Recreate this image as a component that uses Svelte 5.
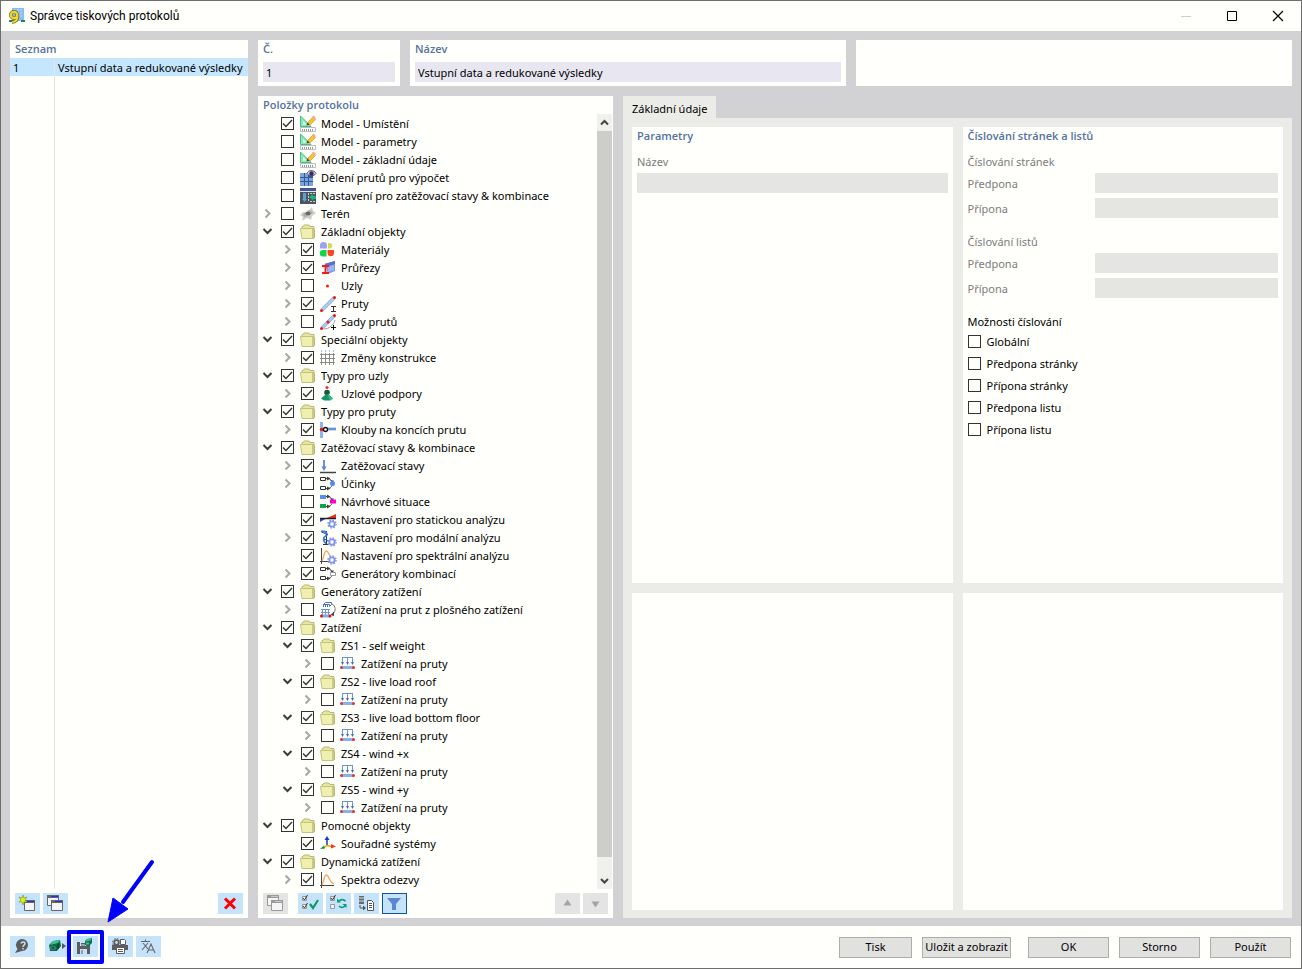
<script lang="ts">
	type Item = {
		label: string;
		icon: string;
		checked?: boolean;
		expandable?: boolean;
		open?: boolean;
		children?: Item[];
	};

	const folder = (label: string, children: Item[]): Item => ({
		label,
		icon: 'folder',
		checked: true,
		expandable: true,
		open: true,
		children
	});

	const loadCase = (label: string) =>
		folder(label, [{ label: 'Zatížení na pruty', icon: 'memberLoad', expandable: true }]);

	let items: Item[] = $state([
		{ label: 'Model - Umístění', icon: 'model', checked: true },
		{ label: 'Model - parametry', icon: 'model' },
		{ label: 'Model - základní údaje', icon: 'model' },
		{ label: 'Dělení prutů pro výpočet', icon: 'mesh' },
		{ label: 'Nastavení pro zatěžovací stavy & kombinace', icon: 'loadSettings' },
		{ label: 'Terén', icon: 'terrain', expandable: true },
		folder('Základní objekty', [
			{ label: 'Materiály', icon: 'materials', checked: true, expandable: true },
			{ label: 'Průřezy', icon: 'sections', checked: true, expandable: true },
			{ label: 'Uzly', icon: 'node', expandable: true },
			{ label: 'Pruty', icon: 'member', checked: true, expandable: true },
			{ label: 'Sady prutů', icon: 'memberSet', expandable: true }
		]),
		folder('Speciální objekty', [
			{ label: 'Změny konstrukce', icon: 'grid', checked: true, expandable: true }
		]),
		folder('Typy pro uzly', [
			{ label: 'Uzlové podpory', icon: 'support', checked: true, expandable: true }
		]),
		folder('Typy pro pruty', [
			{ label: 'Klouby na koncích prutu', icon: 'hinge', checked: true, expandable: true }
		]),
		folder('Zatěžovací stavy & kombinace', [
			{ label: 'Zatěžovací stavy', icon: 'loadCase', checked: true, expandable: true },
			{ label: 'Účinky', icon: 'actions', expandable: true },
			{ label: 'Návrhové situace', icon: 'situations' },
			{ label: 'Nastavení pro statickou analýzu', icon: 'static', checked: true },
			{ label: 'Nastavení pro modální analýzu', icon: 'modal', checked: true, expandable: true },
			{ label: 'Nastavení pro spektrální analýzu', icon: 'spectral', checked: true },
			{ label: 'Generátory kombinací', icon: 'combinations', checked: true, expandable: true }
		]),
		folder('Generátory zatížení', [
			{ label: 'Zatížení na prut z plošného zatížení', icon: 'areaLoad', expandable: true }
		]),
		folder('Zatížení', [
			loadCase('ZS1 - self weight'),
			loadCase('ZS2 - live load roof'),
			loadCase('ZS3 - live load bottom floor'),
			loadCase('ZS4 - wind +x'),
			loadCase('ZS5 - wind +y')
		]),
		folder('Pomocné objekty', [{ label: 'Souřadné systémy', icon: 'axes', checked: true }]),
		folder('Dynamická zatížení', [
			{ label: 'Spektra odezvy', icon: 'spectrum', checked: true, expandable: true }
		])
	]);

	let filterOn = $state(true);
	let name = $state('Vstupní data a redukované výsledky');

	const numberingGroups = ['Číslování stránek', 'Číslování listů'];
	const numberingOptions = [
		'Globální',
		'Předpona stránky',
		'Přípona stránky',
		'Předpona listu',
		'Přípona listu'
	];

	// null inverts the current selection
	function setAll(list: Item[], checked: boolean | null) {
		for (const item of list) {
			item.checked = checked ?? !item.checked;
			if (item.children) setAll(item.children, checked);
		}
	}
</script>

{#snippet gear()}
	<circle cx="12" cy="12" r="2.7" fill="#dfe4fd" stroke="#7f94ea" stroke-width="1.6" />
	<circle cx="12" cy="12" r="4" fill="none" stroke="#7f94ea" stroke-width="1.4" stroke-dasharray="1.6 1.54" />
	<circle cx="12" cy="12" r="1.2" fill="#fff" />
{/snippet}

{#snippet flow()}
	<path d="M6 2.5c4 0 5 1 6 3.5M6 12.5c4 0 5-1 6-3" fill="none" stroke="#3f3f3f" />
	<path d="M7 .5l3.500 2L7 4.500zM7 10.500l3.500 2L7 14.500zM10 4.500h4l-1.500 2.500z" fill="#3f3f3f" />
{/snippet}

{#snippet icon(kind: string)}
	<svg class="icon" viewBox="0 0 16 16" width="16" height="16" aria-hidden="true">
		{#if kind === 'folder'}
			<path d="M2 4V2.5h1l1-1.500h5l1 1.500h4v11" fill="#e6e6a0" stroke="#b9b972" />
			<path d="M.5 4.500h12.500v10H2z" fill="#efefb0" stroke="#c4c47c" />
			<path d="M13 4.500l1.500 1v8L13 14.500z" fill="#dcdc94" stroke="#b9b972" />
		{:else if kind === 'model'}
			<path d="M.5 0v10.500H11z" fill="#7df0b4" stroke="#4fb98a" />
			<path d="M3 5v3.500h3.500z" fill="#fffffb" />
			<path d="M7 8.500L8 6l5-5 2.500 2.500-5 5z" fill="#f9c22e" stroke="#c98d1c" stroke-width=".6" />
			<path d="M12 1l1.500-1.500L16 2l-1.500 1.500z" fill="#f0a8a0" />
			<path d="M6.500 9.500l1-3 2 2z" fill="#4a3a20" />
			<path d="M.5 11.5h15v4H.5z" fill="#fff" stroke="#bdbdbd" />
			<path d="M2.5 13v2M4.5 13v2M6.5 13v2M8.5 13v2M10.5 13v2M12.5 13v2" stroke="#999" />
		{:else if kind === 'mesh'}
			<path d="M0 3h13v13H0z" fill="#33598f" />
			<path d="M0 3h4v4H0zM5 3h3v4H5zM0 8h4v3H0zM5 8h3v3H5zM9 8h4v3H9zM0 12h4v4H0zM5 12h3v4H5zM9 12h4v4H9z" fill="#79a3e2" />
			<path d="M7 3.5c1.500-4 7-4 9 0-2 3-7 3-9 0z" fill="#ddd" stroke="#55556b" />
			<circle cx="11.500" cy="3.5" r="2.200" fill="#2d2a70" />
		{:else if kind === 'loadSettings'}
			<path d="M0 0h16v16H0z" fill="#4d545b" />
			<path d="M1 1h14v1.500H1z" fill="#3b55d8" />
			<path d="M0 3h16v1H0z" fill="#dfe6ee" />
			<path d="M3 5h3v6h1l-2.500 3L2 11h1z" fill="#5aa2d8" />
			<path d="M8.500 5v8M10 5.500h5M10 13.500h5" stroke="#c9ced2" stroke-dasharray="2 1" />
			<path d="M9 9l4-3v2h3v3h-3v1.500z" fill="#1fb573" />
		{:else if kind === 'terrain'}
			<path d="M0 9l3-3 4 0 5-5 1 4 3 2-4 3-1 4-4-2-5 3 1-4z" fill="#cdd0c6" />
			<path d="M3 8l6-4 4 2-4 4-5 1z" fill="#a9aca5" />
			<ellipse cx="8" cy="7.5" rx="2.500" ry="1.800" fill="#63666c" />
		{:else if kind === 'materials'}
			<path d="M0 6.500V4a3.500 3.500 0 0 1 7-1v3.5z" fill="#9da3ee" />
			<path d="M8 1h2.500a3 3 0 0 1 0 5.500H8z" fill="#cfe04a" />
			<path d="M6.500 8H3a3 3 0 0 0 0 6.500h3.500z" fill="#12d44a" />
			<path d="M7.500 8h6.500v3a3.200 3.200 0 0 1-6.500 0z" fill="#ff4326" />
		{:else if kind === 'sections'}
			<path d="M5 4l10-3v10l-7 3z" fill="#7d96ec" />
			<path d="M4 4l11-3v3L8 6z" fill="#5570cf" />
			<path d="M8 7l6-2v5l-6 2z" fill="#9fb2f7" />
			<path d="M2 6h7M2 13h7M5.500 6v7" stroke="#ff1717" stroke-width="1.800" />
		{:else if kind === 'node'}
			<circle cx="7.500" cy="8" r="1.500" fill="#dd2211" />
		{:else if kind === 'member' || kind === 'memberSet'}
			<path d="M2 14L14 2" stroke="#8babdc" stroke-width="3.600" />
			<path d="M2 14L14 2" stroke="#b1cdf4" stroke-width="2" />
			<circle cx="1.500" cy="14.500" r="1.500" fill="#e11" />
			<circle cx="14.500" cy="1.500" r="1.500" fill="#e11" />
			{#if kind === 'member'}
				<path d="M11 10.5h5M11 15.5h5M13.5 10.5v5" stroke="#333" />
			{:else}
				<path d="M4 15c5 0 10-4 11-9" fill="none" stroke="#999" />
				<circle cx="8" cy="8" r="1.500" fill="#e11" />
				<path d="M11 13.5h5M13.5 11v5" stroke="#111" />
			{/if}
		{:else if kind === 'grid'}
			<path d="M1.500 3v12M5.500 3v12M9.500 3v12M13.500 3v12M0 4.500h15M0 8.500h15M0 12.500h15" stroke="#8a8a8a" />
			<path d="M1.500 0v3M5.500 0v3M9.500 0v3M13.500 0v3" stroke="#9dbdf0" stroke-dasharray="2 1" />
		{:else if kind === 'support'}
			<circle cx="7" cy="1.500" r="1.500" fill="#e32" />
			<circle cx="7" cy="6.500" r="2.800" fill="#115b45" />
			<path d="M5.500 8.500h3l4.500 4-3 2H4l-3-2z" fill="#169668" />
			<path d="M7.500 8.500h1l4.500 4-3 2z" fill="#35bd86" />
		{:else if kind === 'hinge'}
			<path d="M1.500 0v16" stroke="#8fb4ea" stroke-width="3" />
			<path d="M7 7h9" stroke="#8fb4ea" stroke-width="3" />
			<path d="M2 7h14" stroke="#5673a6" />
			<circle cx="1.500" cy="7.500" r="1.700" fill="#e11" />
			<circle cx="5.500" cy="7.500" r="2" fill="#fff" stroke="#111" stroke-width="1.300" />
		{:else if kind === 'loadCase'}
			<path d="M0 14.500h16" stroke="#444" stroke-width="1.500" />
			<path d="M4 2v8" stroke="#6b95d8" stroke-width="2" />
			<path d="M1.500 8.500h5L4 13z" fill="#5d86cf" />
		{:else if kind === 'actions'}
			{@render flow()}
			<path d="M.5 1.500h5v3h-5zM.5 10.500h5v3h-5z" fill="#fff" stroke="#333" />
			<circle cx="12.500" cy="7.500" r="2.500" fill="#4b8cf5" />
		{:else if kind === 'situations'}
			{@render flow()}
			<path d="M0 1h6v4H0z" fill="#5a8ff0" />
			<path d="M0 10h6v4H0z" fill="#0ba457" />
			<path d="M10 5.500h6v4h-6z" fill="#f0c" />
		{:else if kind === 'combinations'}
			{@render flow()}
			<path d="M.5 1.500h5v3h-5zM.5 10.500h5v3h-5z" fill="#fff" stroke="#333" />
			<path d="M10.500 6.500h5v3h-5z" fill="#fff" stroke="#999" />
		{:else if kind === 'static'}
			<path d="M0 6h7l-7 4z" fill="#2f45b8" />
			<path d="M7 6l9-4v4z" fill="#f32a18" />
			<path d="M0 6.500h16" stroke="#222" stroke-width="1.500" />
			{@render gear()}
		{:else if kind === 'modal'}
			<path d="M6.500 1v13M3 14.500h6" stroke="#333" />
			<path d="M1 1.500h4c3 2 2 4 0 5s-2 5 1 7" fill="none" stroke="#3d7fd8" stroke-width="1.800" />
			<path d="M2 2l6 3M4 9l5 2" stroke="#214c9b" />
			{@render gear()}
		{:else if kind === 'spectral' || kind === 'spectrum'}
			<path d="M1.500 0v16M0 13.500h14" stroke="#444" />
			<path d="M2 13C4 9 4 3 6.500 3s2 7 7.500 9" fill="none" stroke="#f5a463" stroke-width="1.300" />
			{#if kind === 'spectral'}
				{@render gear()}
			{/if}
		{:else if kind === 'areaLoad'}
			<path d="M3.500 5V2.500l2-2h6v2l-2 2v-2h-6M5.500 3v2M7.500 3v2M3.500 2.500h5" fill="none" stroke="#4b72b8" />
			<path d="M12 2c4 2 4 7 1 10" fill="none" stroke="#777" />
			<path d="M14 9.500v4.500l-3.500-1z" fill="#444" />
			<path d="M1 7.500h9M1 10.500h9M2.500 7v6M5.500 7v6M8.500 7v6" stroke="#6f98da" />
			<path d="M1 14h9" stroke="#85a9e0" stroke-width="3" />
			<circle cx="1.500" cy="14" r="1.500" fill="#e11" />
			<circle cx="10" cy="14" r="1.500" fill="#e11" />
		{:else if kind === 'memberLoad'}
			<path d="M2 1.500h11M2.500 1v7M7.500 1v7M12.500 1v7" fill="none" stroke="#6d93cf" />
			<path d="M1 6h3l-1.500 3zM6 6h3l-1.500 3zM11 6h3l-1.500 3z" fill="#3f6db8" />
			<path d="M1 11.500h13" stroke="#8db0ea" stroke-width="3" />
			<circle cx="1.500" cy="11.500" r="1.500" fill="#e32" />
			<circle cx="13.500" cy="11.500" r="1.500" fill="#e32" />
		{:else if kind === 'axes'}
			<path d="M7 9V2" stroke="#1438c8" stroke-width="1.500" />
			<path d="M4.500 4L7 0l2.500 4z" fill="#1438c8" />
			<path d="M7 9.500l5 1" stroke="#f59b10" stroke-width="1.500" />
			<path d="M11 8l5 2.500-5 2z" fill="#f03c1c" />
			<path d="M7 9.500L3 12" stroke="#d8c400" stroke-width="1.500" />
			<path d="M4 9.500l1 3-5 .5z" fill="#0f9a4e" />
		{/if}
	</svg>
{/snippet}

{#snippet tree(list: Item[])}
	<ul>
		{#each list as item}
			<li>
				<div class="row">
					{#if item.expandable}
						<button
							class="expander"
							class:open={item.open}
							aria-label="Rozbalit {item.label}"
							aria-expanded={!!item.open}
							onclick={() => (item.open = !item.open)}
						>
							<svg viewBox="0 0 13 13" width="13" height="13">
								<path d={item.open ? 'M2.5 4l4 4 4-4' : 'M4.500 2.500l4 4-4 4'} />
							</svg>
						</button>
					{:else}
						<span class="expander"></span>
					{/if}
					<label>
						<input type="checkbox" bind:checked={item.checked} />
						{@render icon(item.icon)}
						<span>{item.label}</span>
					</label>
				</div>
				{#if item.open && item.children}
					{@render tree(item.children)}
				{/if}
			</li>
		{/each}
	</ul>
{/snippet}

{#snippet windows(title: string, frame: string)}
	<svg viewBox="0 0 19 17" width="19" height="17">
		<path d="M1.500 .5h11v10h-11z" fill="#f5f5f5" stroke={frame} />
		<path d="M1 0h12v3H1z" fill={frame} />
		<path d="M5.500 5.500h11v10h-11z" fill="#f5f5f5" stroke={frame} />
		<path d="M5 5h12v3H5z" fill={frame} />
		<path d="M5 1.500h7M9 6.500h7" stroke={title} />
	</svg>
{/snippet}

<div class="window">
	<header>
		<svg viewBox="0 0 16 16" width="16" height="16" aria-hidden="true">
			<path d="M3 0h12v13H3z" fill="#86bdf2" />
			<path d="M5 2h9M5 5h9M11 8h3" stroke="#c3e0fb" stroke-dasharray="2 1" />
			<path d="M0 12h4v2H0zM12 12h4v2h-4z" fill="#178a5c" />
			<circle cx="5" cy="7" r="3.200" fill="none" stroke="#77691c" stroke-width="3.600" />
			<path d="M8.500 7c.5 5-2 7-5.500 7" fill="none" stroke="#77691c" stroke-width="3.400" />
			<circle cx="5" cy="7" r="3.200" fill="none" stroke="#f2da2c" stroke-width="2.200" />
			<path d="M8.300 7c.5 5-2 7-5 7" fill="none" stroke="#f2da2c" stroke-width="2" />
		</svg>
		<h1>Správce tiskových protokolů</h1>
		<div class="caption">
			<button aria-label="Minimalizovat" disabled>
				<svg viewBox="0 0 12 12" width="12" height="12"><path d="M1 6.500h10" stroke="#ccccc8" /></svg>
			</button>
			<button aria-label="Maximalizovat">
				<svg viewBox="0 0 12 12" width="12" height="12">
					<path d="M1.500 1.500h9v9h-9z" fill="none" stroke="#000" />
				</svg>
			</button>
			<button aria-label="Zavřít">
				<svg viewBox="0 0 12 12" width="12" height="12">
					<path d="M1 1l10 10M11 1L1 11" stroke="#000" stroke-width="1.200" />
				</svg>
			</button>
		</div>
	</header>

	<main>
		<section class="panel list">
			<h2>Seznam</h2>
			<table>
				<tbody>
					<tr class="selected"><td>1</td><td>Vstupní data a redukované výsledky</td></tr>
					<tr class="rest"><td></td><td></td></tr>
				</tbody>
			</table>
			<div class="toolbar">
				<button class="tool" aria-label="Nový protokol">
					<svg viewBox="0 0 19 17" width="19" height="17">
						<path d="M6.500 5.500h10v10h-10z" fill="#f5f5f5" stroke="#666" />
						<path d="M6 5h11v3H6z" fill="#666" />
						<path d="M9 6.500h7" stroke="#2828f0" />
						<path d="M5 0l1 3 3-1-2 3 2 2H6l-1 3-1-3H1l2-2-2-3 3 1z" fill="#d4ef1c" stroke="#76921c" stroke-width=".6" />
					</svg>
				</button>
				<button class="tool" aria-label="Kopírovat protokol">{@render windows('#2828f0', '#666')}</button>
				<span class="spacer"></span>
				<button class="tool" aria-label="Smazat">
					<svg viewBox="0 0 19 17" width="19" height="17">
						<path d="M4 3.500l10 10M14 3.500l-10 10" stroke="#f00" stroke-width="3" />
					</svg>
				</button>
			</div>
		</section>

		<div class="content">
			<div class="top">
				<section class="panel field">
					<h2><label for="number">Č.</label></h2>
					<input id="number" type="text" value="1" readonly />
				</section>
				<section class="panel field">
					<h2><label for="name">Název</label></h2>
					<input id="name" type="text" bind:value={name} />
				</section>
				<section class="panel"></section>
			</div>

			<div class="bottom">
				<section class="panel items">
					<h2>Položky protokolu</h2>
					<div class="scroll">
						<div class="tree">{@render tree(items)}</div>
						<div class="scrollbar">
							<button aria-label="Posunout nahoru">
								<svg viewBox="0 0 13 13" width="13" height="13"><path d="M3 8.500L6.500 5l3.500 3.500" /></svg>
							</button>
							<div class="track"><div class="thumb"></div></div>
							<button aria-label="Posunout dolů">
								<svg viewBox="0 0 13 13" width="13" height="13"><path d="M3 5l3.500 3.500L10 5" /></svg>
							</button>
						</div>
					</div>
					<div class="toolbar">
						<button class="tool off" aria-label="Kopírovat" disabled>
							{@render windows('#c8c8c8', '#999')}
						</button>
						<span class="gap"></span>
						<button class="tool" aria-label="Vybrat vše" onclick={() => setAll(items, true)}>
							<svg viewBox="0 0 19 17" width="19" height="17">
								<path d="M1.500 1.500h4v4h-4zM1.500 9.500h4v4h-4z" fill="#fff" stroke="#999" />
								<path d="M2 3l1.500 2 3-5M2 11l1.500 2 3-5" fill="none" stroke="#333" />
								<path d="M9 9l3 4 5-8" fill="none" stroke="#0a9c66" stroke-width="2.200" />
							</svg>
						</button>
						<button class="tool" aria-label="Obrátit výběr" onclick={() => setAll(items, null)}>
							<svg viewBox="0 0 19 17" width="19" height="17">
								<path d="M1.500 1.500h4v4h-4zM1.500 9.500h4v4h-4z" fill="#e8f2fb" stroke="#999" />
								<path d="M2 3l1.500 2 3-5" fill="none" stroke="#333" />
								<path d="M10 6c2-2 4-2 6.500 0M16 11c-2 2-4 2-6 0" fill="none" stroke="#0a9c66" stroke-width="1.700" />
								<path d="M8 3.500v4h4zM17.500 13V9h-4z" fill="#0a9c66" />
							</svg>
						</button>
						<button class="tool" aria-label="Data do protokolu">
							<svg viewBox="0 0 19 17" width="19" height="17">
								<path d="M2 1h5v8H2z" fill="#6a6a6a" />
								<path d="M1.500 3h6M1.500 6h6" stroke="#c5e3fb" />
								<path d="M3 10v3h4" fill="none" stroke="#555" />
								<path d="M6 10.500l3 2.500-3 2.500z" fill="#555" />
								<path d="M10.500 5.500h4l2 2v8h-6z" fill="#fff" stroke="#555" />
								<path d="M12 8.500h3M12 10.500h3M12 12.500h3" stroke="#555" />
							</svg>
						</button>
						<button
							class="tool"
							class:active={filterOn}
							aria-label="Filtr"
							aria-pressed={filterOn}
							onclick={() => (filterOn = !filterOn)}
						>
							<svg viewBox="0 0 19 17" width="19" height="17">
								<path d="M2 3h14l-5 6v6H7V9z" fill="#5a86d4" />
							</svg>
						</button>
						<span class="spacer"></span>
						<button class="tool off" aria-label="Nahoru" disabled>
							<svg viewBox="0 0 19 17" width="19" height="17"><path d="M5.500 10.500l4-6 4 6z" fill="#a4a4a4" /></svg>
						</button>
						<button class="tool off" aria-label="Dolů" disabled>
							<svg viewBox="0 0 19 17" width="19" height="17"><path d="M5.500 6.500l4 6 4-6z" fill="#a4a4a4" /></svg>
						</button>
					</div>
				</section>

				<div class="details">
					<div role="tablist">
						<button class="tab" role="tab" aria-selected="true">Základní údaje</button>
					</div>
					<div class="cards" role="tabpanel">
						<section class="panel card">
							<h2>Parametry</h2>
							<label class="sub muted" for="param-name">Název</label>
							<input id="param-name" type="text" disabled />
						</section>
						<section class="panel card">
							<h2>Číslování stránek a listů</h2>
							{#each numberingGroups as group, i}
								<h3 class="sub muted">{group}</h3>
								<div class="pairs muted">
									<label for="prefix-{i}">Předpona</label>
									<input id="prefix-{i}" type="text" disabled />
									<label for="suffix-{i}">Přípona</label>
									<input id="suffix-{i}" type="text" disabled />
								</div>
							{/each}
							<h3 class="sub">Možnosti číslování</h3>
							{#each numberingOptions as option}
								<label class="option"><input type="checkbox" /><span>{option}</span></label>
							{/each}
						</section>
						<section class="panel"></section>
						<section class="panel"></section>
					</div>
				</div>
			</div>
		</div>
	</main>

	<footer>
		<button class="tool" aria-label="Nápověda">
			<svg viewBox="0 0 19 17" width="19" height="17">
				<path d="M2 15l2.500-4A6 6 0 1 1 9 13z" fill="#5c5c5c" />
				<path d="M8 5.500c.5-2 4-2 4 0 0 1.500-2 1.500-2 3.500M10 10v1.500" fill="none" stroke="#c5e3fb" stroke-width="1.500" />
			</svg>
		</button>
		<span class="gap"></span>
		<button class="tool" aria-label="Načíst šablonu">
			<svg viewBox="0 0 19 17" width="19" height="17">
				<path d="M1 7l4-4 7-1 1 6-4 5-7 0z" fill="#0d6b4c" />
				<path d="M5 3l7-1-2 3-8 2z" fill="#3fc08e" />
				<path d="M2.500 8.500h5v3h-5z" fill="#43a57e" />
				<path d="M3.500 10h3M10 5.500v5" stroke="#083f2d" stroke-width="1.500" />
				<path d="M14 5l4 3-4 3z" fill="#555" />
			</svg>
		</button>
		<div class="marked">
			<button class="tool" aria-label="Uložit jako šablonu">
				<svg viewBox="0 0 19 17" width="19" height="17">
					<path d="M1 4h11l2 2v10H1z" fill="#5c5c5c" />
					<path d="M4 4h6v4H4zM4 11h7v5H4z" fill="#c5e3fb" />
					<path d="M5 5.500h4M5 7h4M6 12v4" stroke="#5c5c5c" />
					<path d="M9 3l2-2 5-1v5l-3 3-4-1z" fill="#0d7451" />
					<path d="M10.500 1.500l5.500-1.500-1.500 2.500-5 1z" fill="#45c293" />
					<path d="M10 4.500h3v2h-3z" fill="#57b892" />
				</svg>
			</button>
			<span class="frame"></span>
			<svg class="pointer" viewBox="0 0 50 66" width="50" height="66" aria-hidden="true">
				<path d="M45 5L16 45" stroke="#00f" stroke-width="4" stroke-linecap="round" />
				<path d="M1 65L6 41l15 11z" fill="#00f" stroke="#00f" />
			</svg>
		</div>
		<span class="gap"></span>
		<button class="tool" aria-label="Nastavení tiskárny">
			<svg viewBox="0 0 19 17" width="19" height="17">
				<path d="M1 7h16v5H1z" fill="#5c5c5c" />
				<path d="M5.500 9.500h8v6h-8z" fill="#fff" stroke="#5c5c5c" />
				<path d="M7 11.500h5M7 13.500h5" stroke="#5c5c5c" />
				<path d="M9.500 1.500h4l1 1v4h-5z" fill="#fff" stroke="#5c5c5c" />
				<circle cx="5.500" cy="4.500" r="4" fill="none" stroke="#5c5c5c" stroke-dasharray="1.600 1.540" />
				<circle cx="5.500" cy="4.500" r="2.300" fill="#c5e3fb" stroke="#5c5c5c" stroke-width="1.800" />
			</svg>
		</button>
		<button class="tool" aria-label="Jazyk">
			<svg viewBox="0 0 19 17" width="19" height="17" fill="none" stroke="#666" stroke-width="1.100">
				<path d="M2 3.500h9M6.500 1.500v2M3 12l6-7M4 5l5 6" />
				<path d="M8 15l4-9 4 9M9.500 12h5" />
			</svg>
		</button>
		<span class="spacer"></span>
		<div class="actions">
			<button class="print">Tisk</button>
			<button class="save">Uložit a zobrazit</button>
			<button>OK</button>
			<button>Storno</button>
			<button>Použít</button>
		</div>
	</footer>
</div>

<style>
	:global(body) {
		margin: 0;
	}

	.window {
		min-height: 100vh;
		box-sizing: border-box;
		display: flex;
		flex-direction: column;
		border: 1px solid #6e6e6e;
		background: #fffffb;
		color: #000;
		font: 11px/18px 'Noto Sans', 'Open Sans', sans-serif;
	}

	button,
	input {
		font: inherit;
		color: inherit;
		margin: 0;
		box-sizing: border-box;
	}

	button {
		display: flex;
		align-items: center;
		justify-content: center;
		padding: 0;
		border: none;
		background: none;
	}

	header {
		display: flex;
		align-items: center;
		height: 30px;
		padding-left: 8px;
	}

	h1 {
		margin: 0 0 0 5px;
		font-family: Roboto, 'Noto Sans', sans-serif;
		font-size: 12px;
		font-weight: 400;
	}

	.caption {
		display: flex;
		margin-left: auto;
	}

	.caption button {
		width: 46px;
		height: 30px;
	}

	main {
		flex: 1;
		display: flex;
		gap: 10px;
		padding: 9px 9px 8px;
		background: #d2d2d5;
	}

	.panel {
		background: #fffffb;
	}

	h2 {
		margin: 0;
		padding: 0 5px;
		font-family: 'Open Sans', 'Noto Sans', sans-serif;
		font-size: 11px;
		line-height: 18px;
		font-weight: 600;
		color: #5672a0;
	}

	.list {
		width: 238px;
		flex-shrink: 0;
		display: flex;
		flex-direction: column;
	}

	table,
	tbody {
		flex: 1;
		display: flex;
		flex-direction: column;
	}

	tr {
		display: grid;
		grid-template-columns: 45px 1fr;
	}

	.selected {
		height: 18px;
		line-height: 20px;
		background: #c4e6fe;
	}

	.rest {
		flex: 1;
	}

	td {
		padding: 0 3px;
		white-space: nowrap;
	}

	td:first-child {
		border-right: 1px solid #e6e6e4;
	}

	.toolbar {
		display: flex;
		gap: 3px;
		padding: 4px 5px;
	}

	.tool {
		width: 25px;
		height: 21px;
		flex-shrink: 0;
		background: #c5e3fb;
	}

	.tool.off {
		background: #e4e4e4;
	}

	.tool.active {
		border: 1px solid #0a57a4;
	}

	.spacer {
		flex: 1;
	}

	.gap {
		width: 4px;
	}

	.content {
		flex: 1;
		min-width: 0;
		display: flex;
		flex-direction: column;
		gap: 10px;
	}

	.top {
		display: grid;
		grid-template-columns: 142px 1fr 1fr;
		gap: 10px;
	}

	.field {
		padding-bottom: 4px;
	}

	.field input {
		display: block;
		width: calc(100% - 10px);
		height: 20px;
		margin: 4px 5px 0;
		padding: 0 3px;
		border: none;
		background: #e8e6f1;
	}

	.bottom {
		flex: 1;
		display: flex;
		gap: 10px;
	}

	.items {
		width: 355px;
		flex-shrink: 0;
		display: flex;
		flex-direction: column;
	}

	.scroll {
		flex: 1;
		display: flex;
		padding-right: 1px;
	}

	.tree {
		flex: 1;
		padding: 1px 0 0 3px;
	}

	ul {
		margin: 0;
		padding: 0;
		list-style: none;
	}

	ul :global(ul) {
		padding-left: 20px;
	}

	.row {
		display: flex;
		align-items: center;
		height: 18px;
		white-space: nowrap;
	}

	.row label {
		display: flex;
		align-items: center;
	}

	.expander {
		width: 13px;
		height: 13px;
		margin: 0 7px 1px 0;
	}

	.expander path {
		fill: none;
		stroke: #a6a6a6;
		stroke-width: 2;
	}

	.expander.open path {
		stroke: #3c3c3c;
	}

	.icon {
		margin: 0 5px 0 6px;
		overflow: visible;
	}

	input[type='checkbox'] {
		appearance: none;
		width: 13px;
		height: 13px;
		margin-bottom: 1px;
		flex-shrink: 0;
		border: 1px solid #333;
		background: #fffffb;
	}

	input[type='checkbox']:checked {
		background-image: url("data:image/svg+xml,%3Csvg xmlns='http://www.w3.org/2000/svg' viewBox='0 0 11 11'%3E%3Cpath d='M1 5.5l3 3 6-6.5' fill='none' stroke='%23333' stroke-width='1.3'/%3E%3C/svg%3E");
	}

	.scrollbar {
		width: 15px;
		display: flex;
		flex-direction: column;
		background: #f0f0ef;
	}

	.scrollbar button {
		height: 17px;
	}

	.scrollbar path {
		fill: none;
		stroke: #444;
		stroke-width: 2;
	}

	.track {
		flex: 1;
	}

	.thumb {
		height: 98%;
		background: #cdcdcb;
	}

	.details {
		flex: 1;
		min-width: 0;
		display: flex;
		flex-direction: column;
	}

	.tab {
		height: 22px;
		padding: 4px 9px 0;
		background: #ebece8;
	}

	.cards {
		flex: 1;
		display: grid;
		grid-template-columns: 1fr 1fr;
		grid-template-rows: 456fr 317fr;
		gap: 10px;
		padding: 9px 9px 8px;
		background: #ebece8;
	}

	.card {
		padding: 0 5px 5px;
	}

	.card h2 {
		padding: 0;
	}

	.sub {
		display: block;
		margin: 15px 0 2px;
		font-size: 11px;
		font-weight: 400;
	}

	h2 + .sub {
		margin-top: 8px;
	}

	.muted {
		color: #7c7c7c;
	}

	.card input[type='text'] {
		display: block;
		width: 100%;
		height: 20px;
		padding: 0 3px;
		border: none;
		background: #e5e5e4;
	}

	.pairs {
		display: grid;
		grid-template-columns: 127px 1fr;
		align-items: center;
		row-gap: 5px;
	}

	.pairs label {
		padding-top: 2px;
	}

	h3.sub:last-of-type {
		margin-bottom: 0;
	}

	.option {
		display: flex;
		align-items: center;
		gap: 6px;
		height: 22px;
	}

	footer {
		display: flex;
		align-items: center;
		gap: 3px;
		height: 42px;
		padding: 0 10px 0 9px;
	}

	footer .tool {
		margin-bottom: 1px;
	}

	.marked {
		position: relative;
	}

	.frame {
		position: absolute;
		inset: -6px;
		border: 4px solid #00f;
		border-radius: 2px;
		pointer-events: none;
	}

	.pointer {
		position: absolute;
		left: 34px;
		bottom: 35px;
		pointer-events: none;
	}

	.actions {
		display: flex;
		gap: 10px;
	}

	.actions button {
		width: 81px;
		height: 21px;
		border: 1px solid #adadad;
		background: #e1e1e0;
		white-space: nowrap;
	}

	.actions .print {
		width: 73px;
	}

	.actions .save {
		width: 89px;
		margin-right: 7px;
	}
</style>
